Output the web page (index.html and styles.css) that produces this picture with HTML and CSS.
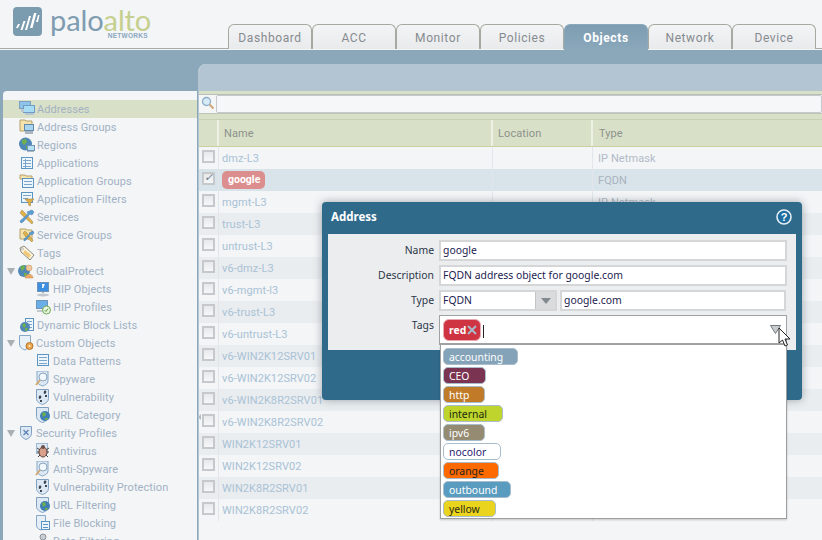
FILE: index.html
```html
<!DOCTYPE html>
<html>
<head>
<meta charset="utf-8">
<title>Palo Alto Networks - Objects</title>
<link rel="stylesheet" href="styles.css">
</head>
<body>
<svg class="defs" width="0" height="0">
  <defs>
    <symbol id="i-mon" viewBox="0 0 16 16"><rect x="0.500" y="0.500" width="11" height="7" fill="#8fc4ea" stroke="#7d9fc0"/><rect x="4.500" y="4.500" width="11" height="7" fill="#a8dcf5" stroke="#6f9cc4"/><path d="M2 8h3v3H2zM6 12h9v2H6z" fill="#b9c6d2"/></symbol>
    <symbol id="i-folder" viewBox="0 0 16 16"><path d="M1 1h5l1 1h6v10H1z" fill="#f5e3ae" stroke="#b7a06b"/><rect x="5.500" y="5.500" width="9" height="6" fill="#a8d4ef" stroke="#6388aa"/><path d="M6 12h8v3H6z" fill="#a9b5c0"/></symbol>
    <symbol id="i-globe" viewBox="0 0 16 16"><circle cx="6.500" cy="7" r="6.500" fill="#4f88b6"/><path d="M3 3l4-1 1 3-3 3-2-2zM7 9l3 0-1 3-2 0z" fill="#6fb04c"/><rect x="8.500" y="8.500" width="7" height="5" fill="#b6e0f5" stroke="#6f94b5"/><path d="M8 14h7v1H8z" fill="#a9b5c0"/></symbol>
    <symbol id="i-table" viewBox="0 0 16 16"><rect x="2.500" y="2.500" width="11" height="11" fill="#eef5fb" stroke="#5b95c4"/><path d="M4 5h8v1H4zM4 8h8v1H4zM4 11h8v1H4z" fill="#7ba6cc"/><path d="M6 4h1v9H6z" fill="#7ba6cc"/></symbol>
    <symbol id="i-tablefolder" viewBox="0 0 16 16"><path d="M1 2h5l1 1h6v3H1z" fill="#f5e3ae" stroke="#b7a06b"/><rect x="3.500" y="5.500" width="11" height="9" fill="#eef5fb" stroke="#5b95c4"/><path d="M5 8h8v1H5zM5 11h8v1H5z" fill="#7ba6cc"/></symbol>
    <symbol id="i-filter" viewBox="0 0 16 16"><rect x="2.500" y="1.500" width="11" height="10" fill="#eef5fb" stroke="#5b95c4"/><path d="M4 4h8v1H4zM4 7h5v1H4z" fill="#7ba6cc"/><path d="M6 8h9l-3.500 4v3l-2-1v-2z" fill="#e0b04c" stroke="#a07c30" stroke-width=".5"/></symbol>
    <symbol id="i-tools" viewBox="0 0 16 16"><path d="M3 1l3 3 8 9-1 2-9-8-3-3z" fill="#dfb24a" stroke="#9b8040" stroke-width=".5"/><path d="M13 1l2 2-2 3-2-1-7 8-2 1-1-2 8-7-1-2z" fill="#5c9fd4" stroke="#3f78a8" stroke-width=".5"/></symbol>
    <symbol id="i-toolsfolder" viewBox="0 0 16 16"><path d="M1 2h6l1 1h5v9H1z" fill="#f5e3ae" stroke="#b7a06b"/><path d="M6 4l2 2 6 7-1 2-7-6-2-3z" fill="#dfb24a" stroke="#9b8040" stroke-width=".5"/><path d="M14 4l1 2-2 2-1-1-5 6-2 1 0-2 6-5-1-1z" fill="#5c9fd4" stroke="#3f78a8" stroke-width=".5"/></symbol>
    <symbol id="i-tag" viewBox="0 0 16 16"><path d="M1 3l4-2 10 9-4 5-9-8z" fill="#fbf3dc" stroke="#8b8b80"/><path d="M6 5l6 5-2 3-6-5z" fill="#f0c878"/><circle cx="3.500" cy="4" r="1" fill="#fff" stroke="#888" stroke-width=".5"/></symbol>
    <symbol id="i-gp" viewBox="0 0 16 16"><circle cx="6" cy="8" r="6" fill="#4f88b6"/><path d="M2 4l4-2 1 3-3 3zM6 10l3 0-1 3-2 0z" fill="#6fb04c"/><circle cx="11" cy="5" r="3" fill="#f3c89a" stroke="#b98c5a" stroke-width=".5"/><path d="M7 15c0-5 8-5 8 0z" fill="#eea860" stroke="#b98c5a" stroke-width=".5"/></symbol>
    <symbol id="i-hipq" viewBox="0 0 16 16"><rect x="2.500" y="1.500" width="11" height="9" fill="#3e8fe0" stroke="#6d94b8"/><path d="M7 3h2.500v1.500L8.500 6v1H7V5.500L8 4.500H7z" fill="#fff"/><path d="M7 11h2v1H7z" fill="#b0b8c0"/><ellipse cx="8" cy="14" rx="6" ry="1.500" fill="#c2c8ce"/></symbol>
    <symbol id="i-hipc" viewBox="0 0 16 16"><rect x="1.500" y="1.500" width="11" height="8" fill="#6aaee8" stroke="#6d94b8"/><path d="M2 11h9v2H2z" fill="#c2c8ce"/><circle cx="11.500" cy="11" r="4" fill="#e8f3e0" stroke="#6fae58"/><path d="M9.500 11l1.500 1.500 2-3" fill="none" stroke="#57a03a"/></symbol>
    <symbol id="i-list" viewBox="0 0 16 16"><rect x="6.500" y="1.500" width="8" height="12" fill="#eef5fb" stroke="#5b95c4"/><path d="M8 4h5v1H8zM8 7h5v1H8zM8 10h5v1H8z" fill="#7ba6cc"/><circle cx="6" cy="10" r="5" fill="#4f88b6"/><path d="M3 8l3-2 1 3-2 2zM6 11h3l-1 3H6z" fill="#6fb04c"/></symbol>
    <symbol id="i-custom" viewBox="0 0 16 16"><path d="M1.500 0.500h11v8c0 3-3 5-5.500 6.500C4 14 1.500 12 1.500 9z" fill="#e8f0f8" stroke="#88a8c8"/><circle cx="11.500" cy="11" r="3.500" fill="#eea64c" stroke="#b2782e"/><circle cx="11.500" cy="11" r="1" fill="#fff2d8"/></symbol>
    <symbol id="i-doc" viewBox="0 0 16 16"><rect x="2.500" y="1.500" width="11" height="11" fill="#eef5fb" stroke="#5b95c4"/><path d="M4 4h8v1H4zM4 7h8v1H4zM4 10h8v1H4z" fill="#7ba6cc"/></symbol>
    <symbol id="i-spy" viewBox="0 0 16 16"><path d="M2 0h11v10c0 3-3 4-5.500 5C5 14 2 13 2 10z" fill="#dce8f4" stroke="#88a8c8"/><circle cx="8" cy="6" r="4" fill="#f0f8fd" stroke="#8ba4bc"/><path d="M5 9l-4 5" stroke="#d2a56c" stroke-width="2"/></symbol>
    <symbol id="i-vuln" viewBox="0 0 16 16"><path d="M1.500 0.500h12v9c0 3-3 5-6 6-3-1-6-3-6-6z" fill="#dce8f4" stroke="#7e9fc0"/><path d="M4 7c2-1 3 0 2 2s-3 1-2-2zM9 2c2-1 3 0 2 2s-3 1-2-2zM5 11h2v2H5zM10 6h2v2h-2z" fill="#3c4650"/></symbol>
    <symbol id="i-url" viewBox="0 0 16 16"><path d="M1.500 0.500h12v9c0 3-3 5-6 6-3-1-6-3-6-6z" fill="#dce8f4" stroke="#7e9fc0"/><circle cx="10" cy="9" r="5" fill="#3f7eb4"/><path d="M7 6l3-1 1 3-3 2zM10 11h3l-1 2h-2z" fill="#6fb04c"/></symbol>
    <symbol id="i-sec" viewBox="0 0 16 16"><path d="M2.500 1.500h11v7c0 3-3 5-5.500 6-2.500-1-5.500-3-5.500-6z" fill="#dce8f4" stroke="#7e9fc0"/><path d="M5.500 5l5 5M10.500 5l-5 5" stroke="#5b7fb4" stroke-width="1.200"/></symbol>
    <symbol id="i-bug" viewBox="0 0 16 16"><rect x="1.500" y="0.500" width="11" height="10" fill="#dce8f4" stroke="#9fb8d0"/><path d="M2 5l3 2M2 9l3 0M3 14l3-3M14 5l-3 2M14 9l-3 0M13 14l-3-3" stroke="#444" fill="none"/><ellipse cx="8" cy="9" rx="4" ry="5" fill="#d9a08c" stroke="#5c4038"/><circle cx="8" cy="4" r="2" fill="#6a5048"/></symbol>
    <symbol id="i-file" viewBox="0 0 16 16"><path d="M1.500 0.500h9v10c0 2-2 3-4.500 4.500C3 14 1.500 13 1.500 10z" fill="#e6eff8" stroke="#88a8c8"/><rect x="6.500" y="6.500" width="8" height="8" fill="#eef5fb" stroke="#5b95c4"/><path d="M8 9h5v1H8zM8 12h5v1H8z" fill="#5b95c4"/></symbol>
    <symbol id="i-dfilter" viewBox="0 0 16 16"><circle cx="8" cy="4" r="3" fill="#c9ced4" stroke="#8b939b"/><path d="M2 15c0-5 12-5 12 0z" fill="#d5dade" stroke="#8b939b"/></symbol>
  </defs>
</svg>

<header class="topbar">
  <div class="logo">
    <svg class="logo-mark" width="30" height="30" viewBox="0 0 30 30">
      <rect x="0" y="0" width="29" height="29" rx="4" fill="#7b9bae"/>
      <path d="M3 21l2-4h2l-2 4zM7.500 23l3-9h2l-3 9zM12 23l4-14h2l-4 14zM17 21l4-15h2.500l-4 15zM23 15l2-7h1.500l-1.500 7z" fill="#fff"/>
    </svg>
    <div class="logo-text">
      <div class="wordmark"><span class="palo">palo</span><span class="alto">alto</span></div>
      <div class="networks">NETWORKS</div>
    </div>
  </div>
  <nav class="tabs">
    <div class="tab">Dashboard</div>
    <div class="tab">ACC</div>
    <div class="tab">Monitor</div>
    <div class="tab">Policies</div>
    <div class="tab active">Objects</div>
    <div class="tab">Network</div>
    <div class="tab">Device</div>
  </nav>
</header>

<main class="content">
  <aside class="sidebar">
    <div class="nav-item selected"><svg class="ico"><use href="#i-mon"/></svg>Addresses</div>
    <div class="nav-item"><svg class="ico"><use href="#i-folder"/></svg>Address Groups</div>
    <div class="nav-item"><svg class="ico"><use href="#i-globe"/></svg>Regions</div>
    <div class="nav-item"><svg class="ico"><use href="#i-table"/></svg>Applications</div>
    <div class="nav-item"><svg class="ico"><use href="#i-tablefolder"/></svg>Application Groups</div>
    <div class="nav-item"><svg class="ico"><use href="#i-filter"/></svg>Application Filters</div>
    <div class="nav-item"><svg class="ico"><use href="#i-tools"/></svg>Services</div>
    <div class="nav-item"><svg class="ico"><use href="#i-toolsfolder"/></svg>Service Groups</div>
    <div class="nav-item"><svg class="ico"><use href="#i-tag"/></svg>Tags</div>
    <div class="nav-item parent"><i class="tri"></i><svg class="ico"><use href="#i-gp"/></svg>GlobalProtect</div>
    <div class="nav-item sub"><svg class="ico"><use href="#i-hipq"/></svg>HIP Objects</div>
    <div class="nav-item sub"><svg class="ico"><use href="#i-hipc"/></svg>HIP Profiles</div>
    <div class="nav-item"><svg class="ico"><use href="#i-list"/></svg>Dynamic Block Lists</div>
    <div class="nav-item parent"><i class="tri"></i><svg class="ico"><use href="#i-custom"/></svg>Custom Objects</div>
    <div class="nav-item sub"><svg class="ico"><use href="#i-doc"/></svg>Data Patterns</div>
    <div class="nav-item sub"><svg class="ico"><use href="#i-spy"/></svg>Spyware</div>
    <div class="nav-item sub"><svg class="ico"><use href="#i-vuln"/></svg>Vulnerability</div>
    <div class="nav-item sub"><svg class="ico"><use href="#i-url"/></svg>URL Category</div>
    <div class="nav-item parent"><i class="tri"></i><svg class="ico"><use href="#i-sec"/></svg>Security Profiles</div>
    <div class="nav-item sub"><svg class="ico"><use href="#i-bug"/></svg>Antivirus</div>
    <div class="nav-item sub"><svg class="ico"><use href="#i-spy"/></svg>Anti-Spyware</div>
    <div class="nav-item sub"><svg class="ico"><use href="#i-vuln"/></svg>Vulnerability Protection</div>
    <div class="nav-item sub"><svg class="ico"><use href="#i-url"/></svg>URL Filtering</div>
    <div class="nav-item sub"><svg class="ico"><use href="#i-file"/></svg>File Blocking</div>
    <div class="nav-item sub"><svg class="ico"><use href="#i-dfilter"/></svg>Data Filtering</div>
  </aside>

  <section class="panel">
    <div class="panel-title"></div>
    <div class="searchbar">
      <svg class="search-ico" width="14" height="14" viewBox="0 0 14 14"><circle cx="5.500" cy="5.500" r="4" fill="#d8ecf8" stroke="#8eaec8" stroke-width="1.300"/><path d="M8.500 8.500l4 4" stroke="#cfa777" stroke-width="2"/></svg>
      <div class="search-input"></div>
    </div>
    <div class="strip"></div>
    <div class="thead">
      <div class="c-check"></div>
      <div class="c-name">Name</div>
      <div class="c-loc">Location</div>
      <div class="c-type">Type</div>
    </div>
    <div class="row"><div class="c-check"><i class="box"></i></div><div class="c-name">dmz-L3</div><div class="c-loc"></div><div class="c-type">IP Netmask</div></div>
    <div class="row sel"><div class="c-check"><i class="box on"></i></div><div class="c-name"><span class="pill-red">google</span></div><div class="c-loc"></div><div class="c-type">FQDN</div></div>
    <div class="row"><div class="c-check"><i class="box"></i></div><div class="c-name">mgmt-L3</div><div class="c-loc"></div><div class="c-type">IP Netmask</div></div>
    <div class="row alt"><div class="c-check"><i class="box"></i></div><div class="c-name">trust-L3</div><div class="c-loc"></div><div class="c-type"></div></div>
    <div class="row"><div class="c-check"><i class="box"></i></div><div class="c-name">untrust-L3</div><div class="c-loc"></div><div class="c-type"></div></div>
    <div class="row alt"><div class="c-check"><i class="box"></i></div><div class="c-name">v6-dmz-L3</div><div class="c-loc"></div><div class="c-type"></div></div>
    <div class="row"><div class="c-check"><i class="box"></i></div><div class="c-name">v6-mgmt-l3</div><div class="c-loc"></div><div class="c-type"></div></div>
    <div class="row alt"><div class="c-check"><i class="box"></i></div><div class="c-name">v6-trust-L3</div><div class="c-loc"></div><div class="c-type"></div></div>
    <div class="row"><div class="c-check"><i class="box"></i></div><div class="c-name">v6-untrust-L3</div><div class="c-loc"></div><div class="c-type"></div></div>
    <div class="row alt"><div class="c-check"><i class="box"></i></div><div class="c-name">v6-WIN2K12SRV01</div><div class="c-loc"></div><div class="c-type"></div></div>
    <div class="row"><div class="c-check"><i class="box"></i></div><div class="c-name">v6-WIN2K12SRV02</div><div class="c-loc"></div><div class="c-type"></div></div>
    <div class="row alt"><div class="c-check"><i class="box"></i></div><div class="c-name">v6-WIN2K8R2SRV01</div><div class="c-loc"></div><div class="c-type"></div></div>
    <div class="row"><div class="c-check"><i class="box"></i></div><div class="c-name">v6-WIN2K8R2SRV02</div><div class="c-loc"></div><div class="c-type"></div></div>
    <div class="row alt"><div class="c-check"><i class="box"></i></div><div class="c-name">WIN2K12SRV01</div><div class="c-loc"></div><div class="c-type"></div></div>
    <div class="row"><div class="c-check"><i class="box"></i></div><div class="c-name">WIN2K12SRV02</div><div class="c-loc"></div><div class="c-type"></div></div>
    <div class="row alt"><div class="c-check"><i class="box"></i></div><div class="c-name">WIN2K8R2SRV01</div><div class="c-loc"></div><div class="c-type"></div></div>
    <div class="row"><div class="c-check"><i class="box"></i></div><div class="c-name">WIN2K8R2SRV02</div><div class="c-loc"></div><div class="c-type"></div></div>
    <i class="splitter"></i>
  </section>
</main>

<div class="dialog">
  <div class="dlg-title">
    <span>Address</span>
    <svg class="help" width="16" height="16" viewBox="0 0 16 16"><circle cx="8" cy="8" r="7" fill="#1f6d9f" stroke="#e6eef4" stroke-width="1.600"/><text x="8" y="11.500" text-anchor="middle" class="help-q">?</text></svg>
  </div>
  <div class="dlg-body">
    <div class="field"><label>Name</label><div class="input">google</div></div>
    <div class="field"><label>Description</label><div class="input">FQDN address object for google.com</div></div>
    <div class="field type-field">
      <label>Type</label>
      <div class="select"><div class="select-val">FQDN</div><div class="select-btn"><i class="select-tri"></i></div></div>
      <div class="input type-val">google.com</div>
    </div>
    <div class="field tags-field">
      <label>Tags</label>
      <div class="tagbox">
        <span class="chip">red<svg class="chip-x" width="10" height="10" viewBox="0 0 10 10"><path d="M1 1l8 8M9 1l-8 8" stroke="#a9b9c8" stroke-width="2"/></svg></span>
        <i class="caret"></i>
        <svg class="tag-tri" width="11" height="9" viewBox="0 0 11 9"><path d="M0.500 0.500h10l-5 8z" fill="#c9ccce" stroke="#74797d"/></svg>
      </div>
    </div>
  </div>
  <div class="dropdown">
    <div class="opt"><span class="tagp t-acc">accounting</span></div>
    <div class="opt"><span class="tagp t-ceo">CEO</span></div>
    <div class="opt"><span class="tagp t-http">http</span></div>
    <div class="opt"><span class="tagp t-int">internal</span></div>
    <div class="opt"><span class="tagp t-ipv6">ipv6</span></div>
    <div class="opt"><span class="tagp t-no">nocolor</span></div>
    <div class="opt"><span class="tagp t-org">orange</span></div>
    <div class="opt"><span class="tagp t-out">outbound</span></div>
    <div class="opt"><span class="tagp t-yel">yellow</span></div>
  </div>
  <svg class="cursor" width="14" height="20" viewBox="0 0 14 20"><path d="M1 1v15l3.500-3 2.500 6 2.500-1-2.500-6h5z" fill="#fff" stroke="#222" stroke-width="1"/></svg>
</div>
</body>
</html>
```
FILE: styles.css
```css
* { box-sizing: border-box; }
html, body { margin: 0; padding: 0; height: 540px; overflow: hidden; }
body { width: 822px; background: #8ba8bb; font-family: "Roboto", "Liberation Sans", sans-serif; position: relative; }
.defs { position: absolute; }

.topbar { height: 50px; background: #f3f5f7; display: flex; position: relative; }
.topbar::after { content: ""; position: absolute; left: 0; right: 0; top: 48px; height: 1px; background: #a9aca6; }
.logo { width: 228px; padding: 7px 0 0 13px; display: flex; flex: none; }
.logo-mark { flex: none; }
.logo-text { margin-left: 7px; width: 98px; }
.wordmark { font-family: "Lato", sans-serif; font-size: 29px; line-height: 24px; letter-spacing: -0.1px; font-weight: 400; padding-top: 1px; display: flex; }
.palo, .alto { display: block; height: 24px; }
.palo { color: #7f9cb1; }
.alto { color: #c6d08e; }
.networks { font-family: "Liberation Sans", sans-serif; font-weight: 700; font-size: 6.500px; letter-spacing: .3px; color: #8aa7c0; text-align: right; margin-top: 0; line-height: 7px; }
.tabs { display: flex; padding-top: 24px; height: 50px; position: relative; z-index: 1; }
.tab { width: 84px; height: 25px; border: 1px solid #a7a89f; border-bottom: 0; border-radius: 6px 6px 0 0; background: linear-gradient(#f3f4f6, #e9eaec); color: #868b8f; font-size: 12px; letter-spacing: .6px; font-weight: 400; text-align: center; line-height: 26px; }
.tab.active { height: 26px; background: linear-gradient(#7d9db2, #8ba8bb); color: #fff; font-weight: 700; border-color: #8ba8bb; }

.content { display: flex; height: 490px; padding: 14px 0 0 3px; align-items: flex-start; }
.sidebar { width: 194px; margin-top: 27px; height: 449px; flex: none; background: #f3f5f7; border-radius: 4px 0 0 0; padding-top: 9px; overflow: hidden; }
.nav-item { height: 18px; display: flex; align-items: center; padding-left: 16px; color: #a2b2c4; font-size: 11px; letter-spacing: .08px; white-space: nowrap; }
.nav-item.selected { background: #d9e0c8; }
.nav-item.sub { padding-left: 32px; }
.nav-item.parent { padding-left: 4px; }
.ico { width: 16px; height: 16px; flex: none; margin-right: 2px; }
.tri { width: 0; height: 0; border-left: 4.500px solid transparent; border-right: 4.500px solid transparent; border-top: 7px solid #a9b0b3; margin-right: 3px; flex: none; }

.panel { flex: 1; height: 476px; background: #f3f5f7; border-radius: 8px 0 0 0; overflow: hidden; margin-left: 1px; position: relative; border-left: 1px solid #b3c5d2; }
.panel-title { height: 27px; background: #b3c5d2; margin-left: -1px; }
.searchbar { height: 22px; background: #f3f5f7; border-top: 3px solid #d9e0c8; display: flex; align-items: flex-start; padding-left: 2px; box-shadow: inset 0 1px 0 #b9bfb8; }
.search-ico { margin-top: 2px; flex: none; }
.search-input { flex: 1; height: 18px; margin: 1px 0 0 1px; background: #f6f7f9; border: 1px solid #c4c9cb; border-radius: 2px; }
.strip { height: 7px; background: #d9e0c8; border-top: 1px solid #bfc5b6; border-bottom: 1px solid #c8cfb8; }
.thead { height: 27px; display: flex; background: #d9e0c8; border-bottom: 1px solid #c9d1a0; color: #8d928c; font-size: 11px; line-height: 28px; letter-spacing: .1px; }
.thead .c-check { width: 20px; }
.thead > div { border-right: 2px solid #edf0e4; }
.thead .c-name { padding-left: 5px; }
.thead .c-loc { padding-left: 5px; }
.thead .c-type { border-right: 0; padding-left: 6px; }
.c-check { width: 20px; flex: none; display: flex; align-items: center; justify-content: center; padding-bottom: 3px; border-right: 1px solid #e2e6ea; }
.c-name { width: 274px; flex: none; padding-left: 3px; border-right: 1px solid #e2e6ea; }
.c-loc { width: 100px; flex: none; border-right: 1px solid #e2e6ea; }
.c-type { flex: 1; padding-left: 5px; }
.row { height: 22px; display: flex; align-items: stretch; font-size: 11px; line-height: 23px; color: #a9c2d5; background: #f3f5f7; letter-spacing: .08px; }
.row .c-type { color: #b2bac6; }
.row.alt { background: #e9edf0; }
.row.sel { background: #d8e3ea; }
.row.sel .c-type { color: #a9b3bf; }
.box { display: block; width: 13px; height: 13px; border: 2px solid #c6c9cb; background: linear-gradient(#e6e8ea, #f6f7f8); position: relative; }
.box.on::after { content: "\2713"; position: absolute; left: 0; top: -3px; font-size: 11px; line-height: 14px; color: #6c7a88; }
.pill-red { display: block; width: 43px; height: 18px; line-height: 18px; padding-left: 6px; background: #dc8d8d; color: #fff; font-weight: 700; font-size: 10.500px; letter-spacing: 0; border-radius: 5px; margin-top: 2px; }
.splitter { position: absolute; left: -1px; top: 350px; width: 0; height: 0; border-top: 3px solid transparent; border-bottom: 3px solid transparent; border-right: 3px solid #b3bcc4; }

.dialog { position: absolute; left: 322px; top: 202px; width: 480px; height: 198px; background: #2f6a8a; border-radius: 4px; box-shadow: 0 0 8px rgba(60, 70, 80, .45); font-family: "Noto Sans", "Liberation Sans", sans-serif; color: #2b3648; font-size: 10.400px; }
.dlg-title { height: 32px; padding: 0 10px 3px 9px; display: flex; align-items: center; justify-content: space-between; color: #fff; font-weight: 700; font-size: 11.500px; }
.help-q { font-family: "Liberation Sans", sans-serif; font-size: 11px; font-weight: 700; fill: #fff; }
.dlg-body { margin: 0 6px; height: 116px; background: #ebedef; padding-top: 6px; }
.field { display: flex; height: 21px; margin-bottom: 4px; }
.field label { width: 106px; text-align: right; margin-right: 5px; line-height: 20px; flex: none; }
.input { flex: none; width: 348px; height: 21px; background: #fff; border: 2px solid #d4d6d8; padding-left: 2px; line-height: 17px; color: #1c1c50; }
.select { display: flex; width: 118px; height: 21px; flex: none; border: 2px solid #d4d6d8; }
.select-val { flex: 1; background: #fff; padding-left: 2px; line-height: 17px; color: #1c1c50; }
.select-btn { width: 20px; background: #d9dbdd; border-left: 1px solid #c2c4c6; display: flex; align-items: center; justify-content: center; }
.select-tri { width: 0; height: 0; border-left: 5px solid transparent; border-right: 5px solid transparent; border-top: 6px solid #828a90; }
.input.type-val { width: 226px; margin-left: 3px; }
.tags-field { height: 30px; margin: 0; }
.tagbox { width: 348px; height: 30px; background: #fff; border: 1px solid #a0a2a4; border-bottom: 2px solid #a0a2a4; display: flex; align-items: flex-start; padding: 3px 0 0 3px; position: relative; }
.chip { display: inline-flex; align-items: center; height: 22px; width: 38px; background: #cf3442; color: #fff; font-weight: 700; border-radius: 6px; border: 1px solid #e6a9af; padding-left: 5px; line-height: 20px; gap: 1px; }
.chip-x { flex: none; }
.caret { width: 1px; height: 13px; background: #222; margin: 6px 0 0 2px; }
.tag-tri { position: absolute; left: 330px; top: 9px; }

.dropdown { position: absolute; left: 118px; top: 143px; width: 347px; height: 174px; background: #fff; border: 1px solid #9c9ea0; border-top: 0; box-shadow: 0 1px 2px rgba(0, 0, 0, .2); padding: 3px 0 0 2px; z-index: 2; }
.opt { height: 19px; }
.tagp { display: inline-block; height: 17px; line-height: 16px; padding: 0 5px; border-radius: 5px; border: 1px solid #a9bccb; color: #fff; }
.t-acc { width: 75px; background: #84a3b8; }
.t-ceo { width: 43px; background: #7a3350; }
.t-http { width: 42px; background: #c07a28; }
.t-int { width: 60px; background: #bfd42c; color: #1a2a10; }
.t-ipv6 { width: 42px; background: #958b72; }
.t-no { width: 58px; background: #fff; color: #2a1a70; }
.t-org { width: 56px; background: #ff6a00; color: #222; }
.t-out { width: 68px; background: #5a9cc0; }
.t-yel { width: 53px; background: #ebd41e; color: #2a2a10; }
.cursor { position: absolute; left: 456px; top: 125px; z-index: 3; }
```
